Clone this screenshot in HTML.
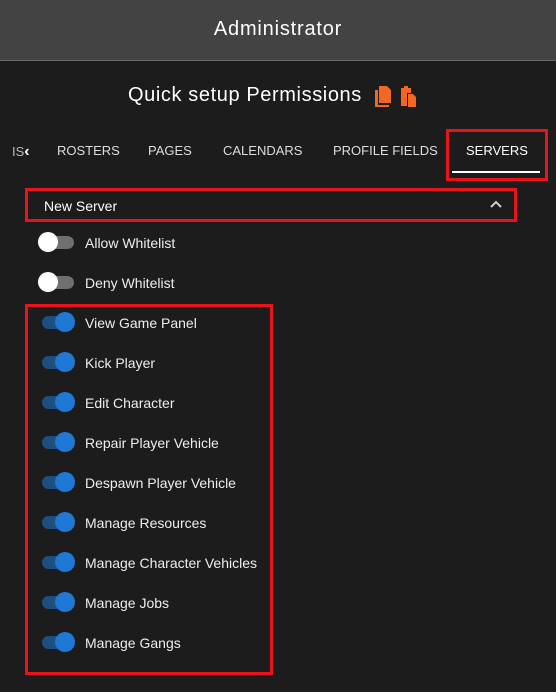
<!DOCTYPE html>
<html><head><style>
*{margin:0;padding:0;box-sizing:border-box}
body{width:556px;height:692px;background:#1c1c1c;font-family:"Liberation Sans",sans-serif;color:#fff;position:relative;overflow:hidden}
.hdr{position:absolute;left:0;top:0;width:556px;height:61px;background:#434343;border-bottom:1px solid #6a6a6a;text-align:center;line-height:58px;font-size:20px;letter-spacing:0.8px}
.title{position:absolute;top:84px;left:128px;font-size:20px;letter-spacing:0.6px}
.tab{position:absolute;top:143px;font-size:13px;color:#ddd}
.box{position:absolute;border:3px solid #e8141c}
.row{position:absolute;left:40px;height:20px;font-size:14px}
.track{position:absolute;left:2px;top:4px;width:32px;height:13px;border-radius:7px;background:#6f6f6f}
.knob{position:absolute;top:0;width:20px;height:20px;border-radius:50%;background:#fff}
.on .track{background:#1c4f80}
.on .knob{left:15px;background:#1e78d4}
.off .knob{left:-2px}
.lbl{position:absolute;left:45px;top:3px;white-space:nowrap;color:#eee}
</style></head><body>
<div class="hdr">Administrator</div>
<div class="title">Quick setup Permissions</div>
<svg style="position:absolute;left:373px;top:85px" width="50" height="24" viewBox="0 0 50 24">
<path d="M6 1h8l4 4v13H6z" fill="#f26722"/><path d="M2 5h3v15h11v2H2z" fill="#f26722"/>
<path d="M31 1h4v3h-4z" fill="#f26722"/><path d="M28 3h10v5h-4v13h-6z" fill="#f26722"/><path d="M35 9h5l3 3v10h-8z" fill="#f26722"/>
</svg>
<div class="tab" style="left:12px;color:#bbb">IS<b style="color:#fff;font-size:16px">&#8249;</b></div>
<div class="tab" style="left:57px">ROSTERS</div>
<div class="tab" style="left:148px">PAGES</div>
<div class="tab" style="left:223px">CALENDARS</div>
<div class="tab" style="left:333px">PROFILE FIELDS</div>
<div class="tab" style="left:466px;color:#fff">SERVERS</div>
<div style="position:absolute;left:452px;top:171px;width:88px;height:2px;background:#fff"></div>
<div class="box" style="left:446px;top:129px;width:102px;height:52px"></div>
<div class="box" style="left:25px;top:188px;width:492px;height:34px"></div>
<div style="position:absolute;left:44px;top:198px;font-size:14px">New Server</div>
<svg style="position:absolute;left:490px;top:200px" width="12" height="8"><path d="M1 7l5-5 5 5" stroke="#ccc" stroke-width="2" fill="none"/></svg>
<div class="box" style="left:25px;top:304px;width:248px;height:371px"></div>
<div class="row off" style="top:232px"><div class="track"></div><div class="knob"></div><div class="lbl">Allow Whitelist</div></div>
<div class="row off" style="top:272px"><div class="track"></div><div class="knob"></div><div class="lbl">Deny Whitelist</div></div>
<div class="row on" style="top:312px"><div class="track"></div><div class="knob"></div><div class="lbl">View Game Panel</div></div>
<div class="row on" style="top:352px"><div class="track"></div><div class="knob"></div><div class="lbl">Kick Player</div></div>
<div class="row on" style="top:392px"><div class="track"></div><div class="knob"></div><div class="lbl">Edit Character</div></div>
<div class="row on" style="top:432px"><div class="track"></div><div class="knob"></div><div class="lbl">Repair Player Vehicle</div></div>
<div class="row on" style="top:472px"><div class="track"></div><div class="knob"></div><div class="lbl">Despawn Player Vehicle</div></div>
<div class="row on" style="top:512px"><div class="track"></div><div class="knob"></div><div class="lbl">Manage Resources</div></div>
<div class="row on" style="top:552px"><div class="track"></div><div class="knob"></div><div class="lbl">Manage Character Vehicles</div></div>
<div class="row on" style="top:592px"><div class="track"></div><div class="knob"></div><div class="lbl">Manage Jobs</div></div>
<div class="row on" style="top:632px"><div class="track"></div><div class="knob"></div><div class="lbl">Manage Gangs</div></div>
</body></html>
